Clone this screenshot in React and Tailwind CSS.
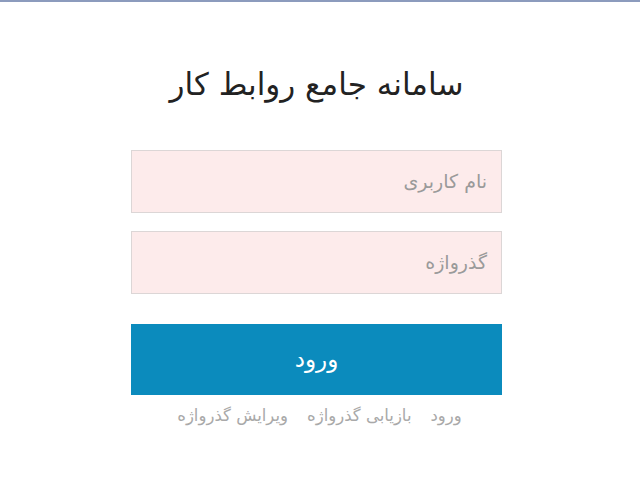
export default function App() {
  return (
    <div className="w-[640px] h-[480px] bg-white border-t-2 border-[#8c9bbd]">
      <div
        dir="rtl"
        className="w-[633px] flex flex-col items-center"
        style={{ fontFamily: '"DejaVu Sans", "Noto Sans", sans-serif' }}
      >
        <h1 className="mt-[60px] text-[31px] leading-[44px] text-[#222] font-normal">سامانه جامع روابط کار</h1>
        <div className="mt-[44px] w-[371px] flex flex-col">
          <div className="h-[63px] bg-[#fdebeb] border border-[#dcd6d6] flex items-center px-[14px] text-[19px] text-[#9a9a9a]">نام کاربری</div>
          <div className="mt-[18px] h-[63px] bg-[#fdebeb] border border-[#dcd6d6] flex items-center px-[14px] text-[19px] text-[#9a9a9a]">گذرواژه</div>
          <div className="mt-[30px] h-[71px] bg-[#0b8bbd] flex items-center justify-center text-[23px] text-white">ورود</div>
          <div className="mt-[9px] pl-[6px] flex justify-center gap-[19px] text-[16.5px] text-[#a9a9a9]">
            <span>ورود</span>
            <span>بازیابی گذرواژه</span>
            <span>ویرایش گذرواژه</span>
          </div>
        </div>
      </div>
    </div>
  );
}
